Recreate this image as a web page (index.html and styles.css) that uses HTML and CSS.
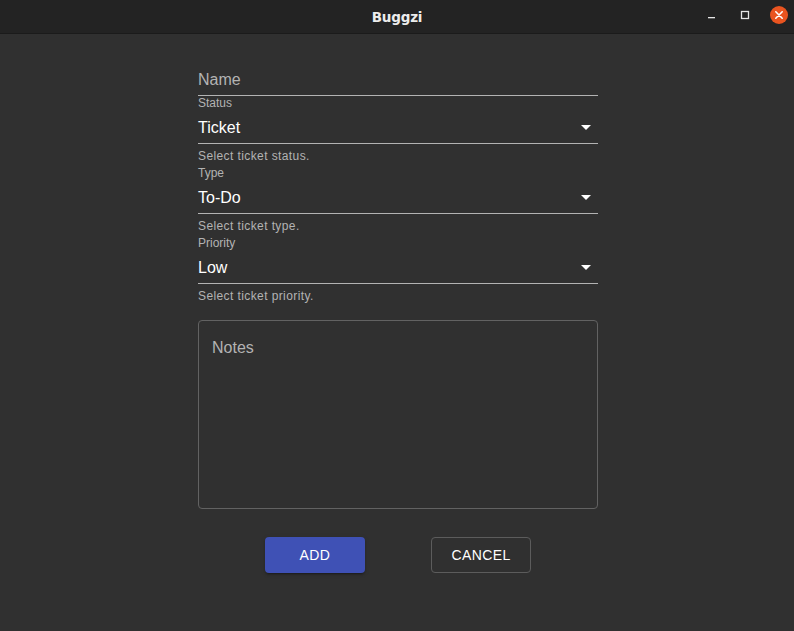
FILE: index.html
```html
<!DOCTYPE html>
<html lang="en">
<head>
<meta charset="utf-8">
<title>Buggzi</title>
<link rel="stylesheet" href="styles.css">
</head>
<body>
<header class="titlebar">
  <div class="title">Buggzi</div>
  <div class="controls">
    <span class="ctl min"><svg width="10" height="10" viewBox="0 0 10 10"><rect x="1" y="7" width="7" height="1.3" fill="#e6e6e6"/></svg></span>
    <span class="ctl max"><svg width="10" height="10" viewBox="0 0 10 10"><rect x="1.5" y="1.5" width="7" height="7" fill="none" stroke="#e6e6e6" stroke-width="1.3"/></svg></span>
    <span class="ctl close"><svg width="18" height="18" viewBox="0 0 18 18"><circle cx="9" cy="9" r="9" fill="#e95420"/><path d="M5.8 5.8 L12.2 12.2 M12.2 5.8 L5.8 12.2" stroke="#fff" stroke-width="1.6" stroke-linecap="round"/></svg></span>
  </div>
</header>
<main class="content">
  <form class="form">
    <div class="field name-field"><span class="placeholder">Name</span></div>

    <div class="select-group">
      <div class="label">Status</div>
      <div class="field select"><span class="value">Ticket</span><span class="arrow"></span></div>
      <div class="helper">Select ticket status.</div>
    </div>
    <div class="select-group">
      <div class="label">Type</div>
      <div class="field select"><span class="value">To-Do</span><span class="arrow"></span></div>
      <div class="helper">Select ticket type.</div>
    </div>
    <div class="select-group">
      <div class="label">Priority</div>
      <div class="field select"><span class="value">Low</span><span class="arrow"></span></div>
      <div class="helper">Select ticket priority.</div>
    </div>

    <div class="notes"><span class="placeholder">Notes</span></div>

    <div class="actions">
      <button type="button" class="btn btn-primary">Add</button>
      <button type="button" class="btn btn-outline">Cancel</button>
    </div>
  </form>
</main>
</body>
</html>
```
FILE: styles.css
```css
html, body {
  margin: 0;
  padding: 0;
}
body {
  background: #303030;
  font-family: "Liberation Sans", Arial, sans-serif;
  width: 794px;
  height: 631px;
  overflow: hidden;
}
.titlebar {
  height: 33px;
  background: #232323;
  border-bottom: 1px solid #1b1b1b;
  display: flex;
  align-items: center;
  justify-content: center;
  position: relative;
}
.title {
  color: #ececec;
  font-family: "DejaVu Sans", sans-serif;
  font-weight: bold;
  font-size: 13.5px;
  letter-spacing: -0.2px;
  margin-top: 1px;
}
.controls {
  position: absolute;
  right: 6px;
  top: 6px;
  display: flex;
  align-items: center;
}
.ctl {
  display: flex;
  align-items: center;
  justify-content: center;
}
.ctl.min { width: 10px; height: 18px; margin-right: 23px; }
.ctl.max { width: 10px; height: 18px; margin-right: 20px; }
.ctl.close { width: 18px; height: 18px; }
.content {
  display: flex;
  justify-content: center;
  padding-top: 30px;
  padding-left: 2px;
}
.form {
  width: 400px;
  margin: 0;
  display: flex;
  flex-direction: column;
}
.field {
  border-bottom: 1px solid #b3b3b3;
  font-size: 16px;
  line-height: 19px;
  display: flex;
  align-items: center;
}
.name-field {
  padding: 6px 0 6px;
}
.placeholder {
  color: #b3b3b3;
}
.select-group {
  display: flex;
  flex-direction: column;
  margin-bottom: 3px;
}
.label {
  font-size: 12px;
  line-height: 14px;
  color: #b3b3b3;
}
.select {
  padding: 8px 0 6px;
  justify-content: space-between;
}
.value {
  color: #ffffff;
}
.arrow {
  width: 0;
  height: 0;
  border-left: 5px solid transparent;
  border-right: 5px solid transparent;
  border-top: 5px solid #ffffff;
  margin-right: 7px;
}
.helper {
  font-size: 12px;
  line-height: 14px;
  letter-spacing: 0.4px;
  color: #b3b3b3;
  margin-top: 5px;
}
.notes {
  margin-top: 14px;
  border: 1px solid #626262;
  border-radius: 4px;
  padding: 17px 13px;
  box-sizing: border-box;
  height: 189px;
  font-size: 16px;
  line-height: 19px;
}
.actions {
  display: flex;
  justify-content: center;
  gap: 66px;
  margin-top: 28px;
}
.btn {
  width: 100px;
  height: 36px;
  border-radius: 4px;
  font-family: "Liberation Sans", Arial, sans-serif;
  font-size: 14px;
  text-transform: uppercase;
  letter-spacing: 0.4px;
  color: #ffffff;
  cursor: pointer;
  padding: 0;
}
.btn-primary {
  background: #3f51b5;
  border: none;
  box-shadow: 0 3px 1px -2px rgba(0,0,0,0.2), 0 2px 2px 0 rgba(0,0,0,0.14), 0 1px 5px 0 rgba(0,0,0,0.12);
}
.btn-outline {
  background: transparent;
  border: 1px solid #5c5c5c;
}
```
